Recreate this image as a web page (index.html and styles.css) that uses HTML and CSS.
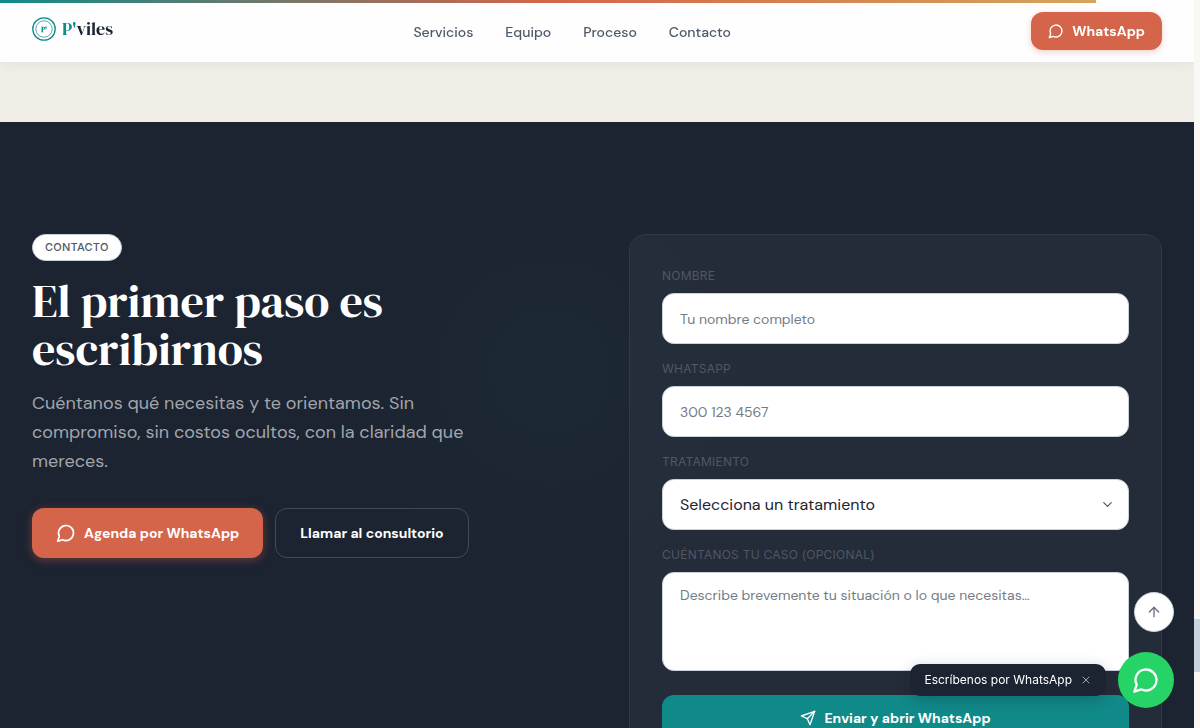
FILE: index.html
```html
<!DOCTYPE html>
<html lang="es">
<head>
<meta charset="utf-8">
<meta name="viewport" content="width=device-width, initial-scale=1">
<title>P'viles</title>
<link rel="stylesheet" href="styles.css">
</head>
<body>
<svg class="sprite" aria-hidden="true">
  <symbol id="chat" viewBox="0 0 24 24"><path d="M7.9 20A9 9 0 1 0 4 16.1L2 22Z"/></symbol>
  <symbol id="send" viewBox="0 0 24 24"><path d="m22 2-7 20-4-9-9-4Z"/><path d="M22 2 11 13"/></symbol>
  <symbol id="up" viewBox="0 0 24 24"><path d="m5 12 7-7 7 7"/><path d="M12 19V5"/></symbol>
  <symbol id="close" viewBox="0 0 24 24"><path d="M18 6 6 18"/><path d="m6 6 12 12"/></symbol>
  <symbol id="down" viewBox="0 0 24 24"><path d="m6 9 6 6 6-6"/></symbol>
</svg>
<div class="progress"></div>
<div class="shell">
  <div class="page">
    <header class="header">
      <a class="logo" href="#">
        <svg class="logo-mark" viewBox="0 0 24 24" aria-hidden="true">
          <circle cx="12" cy="12" r="11.2" stroke-width="1.3"/>
          <circle cx="12" cy="12" r="8.2" stroke-width=".7"/>
          <text x="12" y="14.5" text-anchor="middle">P'</text>
        </svg>
        <span class="logo-text"><span class="logo-accent">P'</span>viles</span>
      </a>
      <nav class="nav">
        <a href="#servicios">Servicios</a>
        <a href="#equipo">Equipo</a>
        <a href="#proceso">Proceso</a>
        <a href="#contacto">Contacto</a>
      </nav>
      <a class="btn btn-coral btn-small" href="#whatsapp"><svg class="icon icon-16"><use href="#chat"/></svg>WhatsApp</a>
    </header>
    <main>
      <div class="band"></div>
      <section class="contact" id="contacto">
        <div class="intro">
          <span class="pill">CONTACTO</span>
          <h1 class="title">El primer paso es escribirnos</h1>
          <p class="lead">Cuéntanos qué necesitas y te orientamos. Sin compromiso, sin costos ocultos, con la claridad que mereces.</p>
          <div class="actions">
            <a class="btn btn-coral" href="#whatsapp"><svg class="icon icon-20"><use href="#chat"/></svg>Agenda por WhatsApp</a>
            <a class="btn btn-outline" href="#llamar">Llamar al consultorio</a>
          </div>
        </div>
        <form class="card">
          <div class="field">
            <label for="nombre">NOMBRE</label>
            <input id="nombre" type="text" placeholder="Tu nombre completo">
          </div>
          <div class="field">
            <label for="telefono">WHATSAPP</label>
            <input id="telefono" type="tel" placeholder="300 123 4567">
          </div>
          <div class="field">
            <label for="tratamiento">TRATAMIENTO</label>
            <div class="select">
              <select id="tratamiento"><option>Selecciona un tratamiento</option></select>
              <svg class="icon select-arrow"><use href="#down"/></svg>
            </div>
          </div>
          <div class="field">
            <label for="caso">CUÉNTANOS TU CASO (OPCIONAL)</label>
            <textarea id="caso" placeholder="Describe brevemente tu situación o lo que necesitas…"></textarea>
          </div>
          <button class="btn btn-teal" type="submit"><svg class="icon icon-16"><use href="#send"/></svg>Enviar y abrir WhatsApp</button>
        </form>
      </section>
    </main>
  </div>
  <div class="rail"><div class="thumb"></div></div>
</div>
<button class="to-top" type="button" aria-label="Volver arriba"><svg class="icon icon-16"><use href="#up"/></svg></button>
<div class="chat">
  <div class="chat-tip">Escríbenos por WhatsApp<button type="button" aria-label="Cerrar"><svg class="icon icon-12"><use href="#close"/></svg></button></div>
  <a class="chat-button" href="#whatsapp" aria-label="WhatsApp"><svg class="icon icon-28"><use href="#chat"/></svg></a>
</div>
</body>
</html>
```

FILE: styles.css
```css
* { box-sizing: border-box; }

:root {
  --ink: #1c2331;
  --teal: #108a89;
  --coral: #d4654a;
  --slate: #4f5a69;
  --line: #c9d1dc;
  --small: Inter, "Liberation Sans", sans-serif;
}

body {
  margin: 0;
  background: #faf8f4;
  color: var(--ink);
  font-family: "DM Sans", Inter, "Liberation Sans", sans-serif;
}

a { color: inherit; text-decoration: none; }
button, input, select, textarea { font: inherit; }
.sprite { display: none; }

.icon {
  flex: none;
  fill: none;
  stroke: currentColor;
  stroke-width: 2;
  stroke-linecap: round;
  stroke-linejoin: round;
}
.icon-12 { width: 12px; height: 12px; }
.icon-16 { width: 16px; height: 16px; }
.icon-20 { width: 20px; height: 20px; }
.icon-28 { width: 28px; height: 28px; }

.progress {
  position: fixed;
  z-index: 5;
  top: 0;
  left: 0;
  width: 91.3%;
  height: 3px;
  background: linear-gradient(90deg, var(--teal), var(--coral) 50%, #d4a55a);
}

.shell { display: flex; height: 100vh; }
.page { flex: 1; min-width: 0; overflow-y: auto; scrollbar-width: none; }
.rail { width: 6px; display: flex; flex-direction: column; justify-content: flex-end; padding-bottom: 56px; }
.thumb { height: 53px; background: #cbd5e1; }

.header {
  position: sticky;
  z-index: 2;
  top: 0;
  display: flex;
  align-items: center;
  justify-content: space-between;
  padding: 12px 32px;
  border-bottom: 1px solid #e6e6e4;
  background: #fefefe;
  box-shadow: 0 2px 12px rgba(28, 35, 49, .05);
}
.logo { display: flex; align-items: center; gap: 6px; padding-bottom: 4px; }
.logo-mark { width: 24px; height: 24px; fill: none; stroke: var(--teal); }
.logo-mark text { fill: var(--teal); stroke: none; font: bold 7px "DM Serif Display", "Liberation Serif", serif; }
.logo-text { font: 400 18px/24px "DM Serif Display", "Liberation Serif", serif; }
.logo-accent { color: var(--teal); }
.nav { display: flex; gap: 32px; padding-top: 2px; color: var(--slate); font-size: 14px; font-weight: 500; line-height: 20px; }

.btn {
  display: inline-flex;
  align-items: center;
  justify-content: center;
  gap: 8px;
  height: 50px;
  padding: 0 24px;
  border: 0;
  border-radius: 12px;
  color: #fff;
  font-size: 14px;
  font-weight: 700;
  line-height: 20px;
  white-space: nowrap;
}
.btn-coral { background: var(--coral); box-shadow: 0 2px 10px rgba(212, 101, 74, .4); }
.btn-small { height: 38px; padding: 0 17px; box-shadow: 0 2px 6px rgba(212, 101, 74, .3); }
.btn-outline { border: 1px solid #434a57; }
.btn-teal { width: 100%; height: 46px; margin-top: 8px; background: var(--teal); }

.band { height: 59px; background: #f1eee7; }

.contact {
  display: grid;
  grid-template-columns: 1fr 1fr;
  align-items: start;
  gap: 64px;
  padding: 112px 32px;
  background: radial-gradient(circle 240px at 550px 250px, #1c2935, var(--ink)) var(--ink);
}
.intro { display: flex; flex-direction: column; align-items: flex-start; }
.pill {
  padding: 4px 12px;
  border: 1px solid var(--line);
  border-radius: 14px;
  background: #fff;
  color: var(--slate);
  font-family: var(--small);
  font-size: 11px;
  font-weight: 500;
  line-height: 17px;
  letter-spacing: .02em;
}
.title { max-width: 420px; margin: 16px 0; color: #fff; font: 400 46px/48px "DM Serif Display", "Liberation Serif", serif; }
.lead { max-width: 450px; margin: 0 0 32px; color: #a1a6ad; font-size: 18px; line-height: 29px; }
.actions { display: flex; gap: 12px; }

.card {
  display: flex;
  flex-direction: column;
  gap: 16px;
  padding: 32px;
  border: 1px solid #323945;
  border-radius: 16px;
  background: rgba(255, 255, 255, .04);
}
.field { display: flex; flex-direction: column; gap: 8px; }
.field label { color: #4f5865; font-family: var(--small); font-size: 12px; font-weight: 400; line-height: 18px; letter-spacing: .02em; }
.field input, .field select, .field textarea {
  width: 100%;
  height: 51px;
  padding: 0 17px;
  border: 1px solid var(--line);
  border-radius: 12px;
  outline: 0;
  background: #fff;
  color: var(--ink);
  font-size: 14px;
}
.field textarea { display: block; height: 99px; padding: 12px 17px; line-height: 20px; resize: none; }
.field select { appearance: none; font-size: 16px; }
.field ::placeholder { color: #747b86; opacity: 1; }
.select { position: relative; }
.select-arrow { position: absolute; top: 18px; right: 14px; width: 15px; height: 15px; color: var(--slate); pointer-events: none; }

.to-top {
  position: fixed;
  z-index: 3;
  right: 26px;
  bottom: 96px;
  display: grid;
  place-items: center;
  width: 40px;
  height: 40px;
  padding: 0;
  border: 1px solid var(--line);
  border-radius: 50%;
  background: #fff;
  color: #69717e;
}
.chat { position: fixed; z-index: 3; right: 26px; bottom: 20px; display: flex; align-items: center; gap: 12px; }
.chat-tip {
  display: flex;
  align-items: center;
  gap: 8px;
  padding: 6px 14px;
  border-radius: 10px;
  background: var(--ink);
  box-shadow: 0 4px 14px rgba(28, 35, 49, .3);
  color: #fff;
  font-family: var(--small);
  font-size: 12px;
  line-height: 20px;
}
.chat-tip button { display: flex; padding: 0; border: 0; background: none; color: #a1a6ad; }
.chat-button { display: grid; place-items: center; width: 56px; height: 56px; border-radius: 50%; background: #25d366; color: #fff; }
```
